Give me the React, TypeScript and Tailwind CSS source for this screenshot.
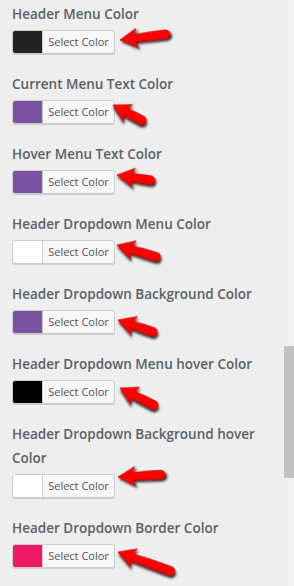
import React from "react";

type Item = {
  label: string;
  color: string;
  arrow: { top: number; left: number; angle: number; length: number };
};

const items: Item[] = [
  {
    label: "Header Menu Color",
    color: "#222222",
    arrow: { top: 10, left: 120, angle: -7, length: 50 },
  },
  {
    label: "Current Menu Text Color",
    color: "#7b51a2",
    arrow: { top: 5, left: 113, angle: 28, length: 37 },
  },
  {
    label: "Hover Menu Text Color",
    color: "#7b51a2",
    arrow: { top: 5, left: 117, angle: 9, length: 38 },
  },
  {
    label: "Header Dropdown Menu Color",
    color: "#ffffff",
    arrow: { top: 5, left: 117, angle: 17, length: 45 },
  },
  {
    label: "Header Dropdown Background Color",
    color: "#7b51a2",
    arrow: { top: 10, left: 118, angle: 19, length: 41 },
  },
  {
    label: "Header Dropdown Menu hover Color",
    color: "#000000",
    arrow: { top: 8, left: 120, angle: 27, length: 42 },
  },
  {
    label: "Header Dropdown Background hover Color",
    color: "#ffffff",
    arrow: { top: 3, left: 118, angle: -3, length: 47 },
  },
  {
    label: "Header Dropdown Border Color",
    color: "#ef1867",
    arrow: { top: 8, left: 118, angle: 20, length: 60 },
  },
];

// RED ANNOTATION ARROW (points left, tip at origin)
function Arrow({
  angle,
  length,
}: {
  angle: number;
  length: number;
}) {
  const L = length;
  const d = `M0,0 L17,-9.5 L14.5,-3.6 Q${L * 0.6},-4.6 ${L - 4},-4.4 A4.2,4.2 0 0 1 ${L - 4},4 Q${L * 0.6},4.2 14.5,3.6 L17,9.5 Z`;

  return (
    <svg width="90" height="60" viewBox="0 0 90 60" className="overflow-visible">
      <defs>
        <filter id="arrowShadow" x="-20%" y="-40%" width="160%" height="200%">
          <feDropShadow dx="1.6" dy="2.2" stdDeviation="1.1" floodColor="#000" floodOpacity="0.85" />
        </filter>
      </defs>
      <g transform={`translate(6,30) rotate(${angle})`} filter="url(#arrowShadow)">
        <path d={d} fill="#ff0000" stroke="#c80000" strokeWidth="0.8" strokeLinejoin="round" />
      </g>
    </svg>
  );
}

export default function App() {
  return (
    <main
      className="w-[294px] h-[586px] overflow-hidden bg-[#eeeeee] flex"
      style={{ fontFamily: "'Open Sans', 'Noto Sans', sans-serif" }}
    >

      {/* CONTROLS */}
      <div className="flex-1 pl-3 pr-[12px]">

        {items.map((item) => (
          <div key={item.label} className="pb-4">

            <span className="block pt-[2px] text-[13.5px] leading-[24px] font-semibold text-[#5a6169] mb-[4px]">
              {item.label}
            </span>

            <div className="relative h-6">

              {/* COLOR BUTTON */}
              <button className="flex h-6 w-[103px] rounded-[3px] border border-[#cccccc] bg-[#f7f7f7] overflow-hidden shadow-[0_1px_0_#cccccc]">
                <span
                  className="block h-full w-[30px] border-r border-[#cccccc]"
                  style={{ backgroundColor: item.color }}
                />
                <span className="flex-1 flex items-center justify-center text-[11px] text-[#555555]">
                  Select Color
                </span>
              </button>

              {/* ARROW */}
              <div
                className="absolute pointer-events-none"
                style={{
                  left: item.arrow.left - 12 - 6,
                  top: item.arrow.top - 30,
                }}
              >
                <Arrow
                  angle={item.arrow.angle}
                  length={item.arrow.length}
                />
              </div>

            </div>

          </div>
        ))}

      </div>

      {/* SCROLLBAR */}
      <div className="w-[10px] h-full bg-[#f1f1f1] pt-[346px]">
        <div className="h-[132px] bg-[#c1c1c1]" />
      </div>

    </main>
  );
}
